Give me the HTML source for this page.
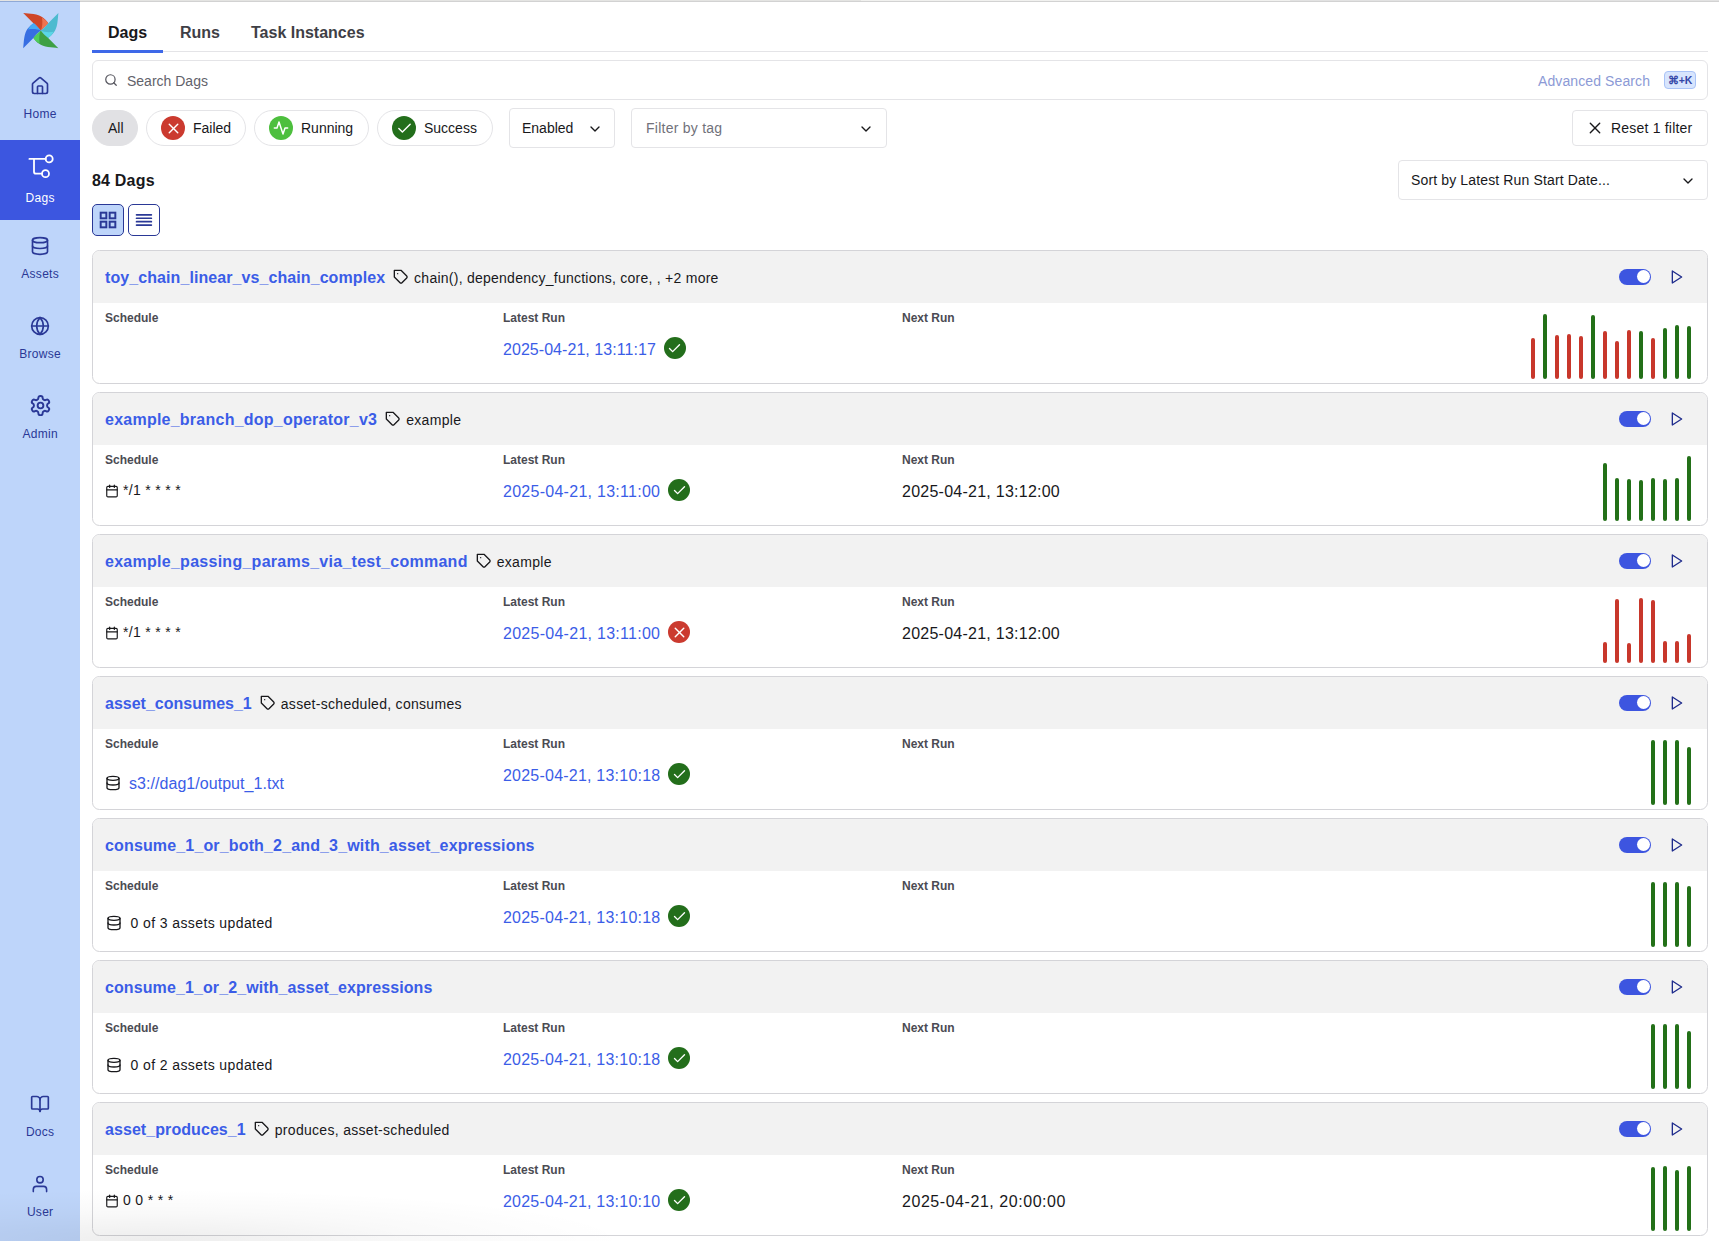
<!DOCTYPE html><html><head><meta charset="utf-8"><style>

*{box-sizing:border-box;margin:0;padding:0}
html,body{width:1719px;height:1241px;overflow:hidden;background:#fff;font-family:"Liberation Sans", sans-serif;color:#18181b}
.topline{position:absolute;left:0;top:0;width:1719px;height:1px;background:#e4e4e2;z-index:10}
.topline2{position:absolute;left:0;top:1px;width:1719px;height:1px;background:#d2d2d2;z-index:10}
.topline3{position:absolute;left:0;top:1px;width:80px;height:1px;background:#8fa9d6;z-index:11}
.side{position:absolute;left:0;top:0;width:80px;height:1241px;background:#bed5fa}
.logo{position:absolute;left:20px;top:10px;width:42px;height:42px}
.nav{position:absolute;left:0;width:80px;height:80px;color:#2a3896;text-align:center}
.nav.active{background:#3c56e0;color:#fff}
.nav svg{position:absolute;left:30px;top:16px}
.nav .t{position:absolute;left:0;right:0;top:46px;font-size:12px;line-height:16px;letter-spacing:0.3px;text-indent:0.3px}
.tabs{position:absolute;left:92px;top:0;width:1616px;height:52px}
.tabline{position:absolute;left:92px;top:51px;width:1616px;height:1px;background:#e4e4e7}
.tab{position:absolute;top:21px;font-size:16px;line-height:24px;font-weight:bold;color:#3f3f46}
.tab.act{color:#18181b}
.tabul{position:absolute;left:92px;top:50px;width:71px;height:3px;background:#3e68e8}
.search{position:absolute;left:92px;top:60px;width:1616px;height:40px;border:1px solid #e4e4e7;border-radius:6px}
.search .ph{position:absolute;left:34px;top:10px;font-size:14px;line-height:20px;color:#62626b}
.search .adv{position:absolute;left:1445px;top:10px;letter-spacing:0.1px;font-size:14px;line-height:20px;color:#8c9ad6}
.kbd{position:absolute;left:1571px;top:10px;width:32px;height:18px;border:1px solid #a9c3f7;background:#d8e5fd;border-radius:4px;font-size:10.5px;line-height:16px;text-align:center;color:#3445a6;font-weight:bold}
.pill{position:absolute;top:110px;height:36px;border:1px solid #e4e4e7;border-radius:18px;font-size:14px;line-height:34px;color:#18181b}
.pill .dot{position:absolute;left:14px;top:5px;width:24px;height:24px;border-radius:12px;display:flex;align-items:center;justify-content:center}
.pill .pt{position:absolute;left:46px;top:0}
.sel{position:absolute;top:108px;height:40px;border:1px solid #e4e4e7;border-radius:4px;font-size:14px;line-height:38px}
.chev{position:absolute;top:11.5px;line-height:0}
.count{position:absolute;left:92px;top:169px;letter-spacing:0.2px;font-size:16px;line-height:24px;font-weight:bold}
.vbtn{position:absolute;top:204px;width:32px;height:32px;border:1px solid #2a3896;border-radius:5px;color:#2a3896}
.card{position:absolute;left:92px;width:1616px;height:134px;border:1px solid #d4d4d8;border-radius:7.5px;overflow:hidden;background:#fff}
.chead{position:absolute;left:0;top:0;width:100%;height:52px;background:#f2f2f2;display:flex;align-items:center;padding-left:12px;padding-top:2px}
.ctitle{font-size:16px;line-height:24px;font-weight:bold;color:#3b5de7;white-space:nowrap}
.ctagicon{display:inline-block;width:16px;height:16px;margin-left:8px;color:#18181b;position:relative;top:-1px}
.ctagicon svg{display:block}
.ctags{font-size:14px;line-height:20px;white-space:nowrap;margin-left:5px;letter-spacing:0.25px}
.toggle{position:absolute;left:1526px;top:18px;width:32px;height:16px;border-radius:8px;background:#3d55e0}
.knob{position:absolute;left:17.5px;top:1px;width:13px;height:13px;border-radius:7px;background:#fff}
.play{position:absolute;left:1576px;top:18px;width:16px;height:16px;color:#1e2b8c}
.play svg{display:block}
.cbody{position:absolute;left:0;top:52px;width:100%;height:81px}
.lbl{position:absolute;top:7px;font-size:12px;line-height:16px;font-weight:bold;color:#4b4b53}
.sched{position:absolute;left:12px;font-size:14px;line-height:20px;white-space:nowrap;display:flex;align-items:center}
.sched .ic{display:inline-block;width:16px;height:16px}
.sched .ic svg{display:block}
.sched.cron{top:35px;letter-spacing:0.33px}
.sched.cron .ic{width:14px;height:14px;position:relative;top:1px}
.sched.cron .ic{margin-right:4px}
.sched.asset{top:43px;font-size:16px;line-height:24px}
.sched.asset .ic{margin-right:8px;position:relative;top:-1px}
.sched.asset .lnk{letter-spacing:0.05px}
.sched.assets{top:42px;letter-spacing:0.4px;left:13px}
.sched.assets .ic{margin-right:8.5px}
.lnk{color:#3b5de7}
.latest .lnk{position:relative;top:2px}
.latest{position:absolute;left:410px;top:33px;font-size:16px;line-height:24px;display:flex;align-items:center;white-space:nowrap}
.st{display:inline-flex;align-items:center;justify-content:center;border-radius:50%;margin-left:8px}
.st svg{display:block}
.st.ok{background:#236e1b}
.st.bad{background:#cb3a2f}
.next{position:absolute;left:809px;top:35px;letter-spacing:0.25px;font-size:16px;line-height:24px;white-space:nowrap}
.bar{position:absolute;bottom:5px;width:4px;border-radius:2px}
.bar.g{background:#237018}
.bar.r{background:#c8372b}

</style></head><body>
<div class="topline"></div><div class="topline2"></div><div class="topline3"></div><div style="position:absolute;left:861px;top:0;width:429px;height:1px;background:#f1f1ef;z-index:12"></div><div style="position:absolute;left:1291px;top:0;width:428px;height:1px;background:#e2e2e2;z-index:12"></div>
<div class="side">
<svg class="logo" viewBox="0 0 42 42"><g transform="translate(20.8 20.6)"><g transform="rotate(0)"><path fill="#cf4627" d="M-17.6 -17.6 C-11 -16.8 -3 -17 2 -13 C4 -11.5 6 -9.5 7.4 -7.3 L7.4 -6.9 L0 0 C-2 -2.5 -4.5 -5.5 -7.4 -7.4 Z"/><path fill="#ee7350" d="M1.2 -12.8 C4 -11 6 -9.5 7.4 -7.3 L7.4 -6.9 L0 0 C1.6 -3 1.9 -8 1.2 -12.8 Z"/></g><g transform="rotate(90)"><path fill="#4cbbcf" d="M-17.6 -17.6 C-11 -16.8 -3 -17 2 -13 C4 -11.5 6 -9.5 7.4 -7.3 L7.4 -6.9 L0 0 C-2 -2.5 -4.5 -5.5 -7.4 -7.4 Z"/><path fill="#5ad6e6" d="M1.2 -12.8 C4 -11 6 -9.5 7.4 -7.3 L7.4 -6.9 L0 0 C1.6 -3 1.9 -8 1.2 -12.8 Z"/></g><g transform="rotate(180)"><path fill="#3ea044" d="M-17.6 -17.6 C-11 -16.8 -3 -17 2 -13 C4 -11.5 6 -9.5 7.4 -7.3 L7.4 -6.9 L0 0 C-2 -2.5 -4.5 -5.5 -7.4 -7.4 Z"/><path fill="#50cd5a" d="M1.2 -12.8 C4 -11 6 -9.5 7.4 -7.3 L7.4 -6.9 L0 0 C1.6 -3 1.9 -8 1.2 -12.8 Z"/></g><g transform="rotate(270)"><path fill="#376ee2" d="M-17.6 -17.6 C-11 -16.8 -3 -17 2 -13 C4 -11.5 6 -9.5 7.4 -7.3 L7.4 -6.9 L0 0 C-2 -2.5 -4.5 -5.5 -7.4 -7.4 Z"/><path fill="#46abf5" d="M1.2 -12.8 C4 -11 6 -9.5 7.4 -7.3 L7.4 -6.9 L0 0 C1.6 -3 1.9 -8 1.2 -12.8 Z"/></g></g></svg>
<div class="nav" style="top:60px"><svg width="20" height="20" viewBox="0 0 24 24" fill="none" stroke="currentColor" stroke-width="2" stroke-linecap="round" stroke-linejoin="round"><path d="M15 21v-8a1 1 0 0 0-1-1h-4a1 1 0 0 0-1 1v8"/><path d="M3 10a2 2 0 0 1 .709-1.528l7-5.999a2 2 0 0 1 2.582 0l7 5.999A2 2 0 0 1 21 10v9a2 2 0 0 1-2 2H5a2 2 0 0 1-2-2z"/></svg><div class="t" style="top:46px">Home</div></div>
<div class="nav active" style="top:140px"><svg width="26" height="26" viewBox="0 0 26 26" fill="none" stroke="currentColor" stroke-width="1.8" stroke-linecap="round" stroke-linejoin="round" style="left:28px;top:14px"><path d="M1.4 4.9H17.7"/><circle cx="21.2" cy="4.9" r="3.5"/><path d="M6 4.9V17.7a2 2 0 0 0 2 2H14"/><circle cx="17.5" cy="19.7" r="3.5"/></svg><div class="t" style="top:50px">Dags</div></div>
<div class="nav" style="top:220px"><svg width="20" height="20" viewBox="0 0 24 24" fill="none" stroke="currentColor" stroke-width="2" stroke-linecap="round" stroke-linejoin="round"><ellipse cx="12" cy="5" rx="9" ry="3"/><path d="M3 5v14a9 3 0 0 0 18 0V5"/><path d="M3 12a9 3 0 0 0 18 0"/></svg><div class="t" style="top:46px">Assets</div></div>
<div class="nav" style="top:300px"><svg width="20" height="20" viewBox="0 0 24 24" fill="none" stroke="currentColor" stroke-width="2" stroke-linecap="round" stroke-linejoin="round"><circle cx="12" cy="12" r="10"/><path d="M12 2a14.5 14.5 0 0 0 0 20 14.5 14.5 0 0 0 0-20"/><path d="M2 12h20"/></svg><div class="t" style="top:46px">Browse</div></div>
<div class="nav" style="top:380px"><svg width="23" height="23" style="left:28.5px;top:14px" viewBox="0 0 24 24" fill="none" stroke="currentColor" stroke-width="2" stroke-linecap="round" stroke-linejoin="round"><path d="M12.22 2h-.44a2 2 0 0 0-2 2v.18a2 2 0 0 1-1 1.73l-.43.25a2 2 0 0 1-2 0l-.15-.08a2 2 0 0 0-2.73.73l-.22.38a2 2 0 0 0 .73 2.73l.15.1a2 2 0 0 1 1 1.72v.51a2 2 0 0 1-1 1.74l-.15.09a2 2 0 0 0-.73 2.73l.22.38a2 2 0 0 0 2.73.73l.15-.08a2 2 0 0 1 2 0l.43.25a2 2 0 0 1 1 1.73V20a2 2 0 0 0 2 2h.44a2 2 0 0 0 2-2v-.18a2 2 0 0 1 1-1.73l.43-.25a2 2 0 0 1 2 0l.15.08a2 2 0 0 0 2.73-.73l.22-.39a2 2 0 0 0-.73-2.73l-.15-.08a2 2 0 0 1-1-1.74v-.5a2 2 0 0 1 1-1.74l.15-.09a2 2 0 0 0 .73-2.73l-.22-.38a2 2 0 0 0-2.73-.73l-.15.08a2 2 0 0 1-2 0l-.43-.25a2 2 0 0 1-1-1.73V4a2 2 0 0 0-2-2z"/><circle cx="12" cy="12" r="3"/></svg><div class="t" style="top:46px">Admin</div></div>
<div class="nav" style="top:1078px"><svg width="20" height="20" viewBox="0 0 24 24" fill="none" stroke="currentColor" stroke-width="2" stroke-linecap="round" stroke-linejoin="round"><path d="M12 7v14"/><path d="M3 18a1 1 0 0 1-1-1V4a1 1 0 0 1 1-1h5a4 4 0 0 1 4 4 4 4 0 0 1 4-4h5a1 1 0 0 1 1 1v13a1 1 0 0 1-1 1h-6a3 3 0 0 0-3 3 3 3 0 0 0-3-3z"/></svg><div class="t" style="top:46px">Docs</div></div>
<div class="nav" style="top:1158px"><svg width="24" height="24" viewBox="0 0 24 24" fill="none" stroke="currentColor" stroke-width="1.6" stroke-linecap="round" stroke-linejoin="round" style="left:28px;top:14px"><circle cx="12" cy="7.7" r="3.2"/><path d="M5.3 19.6V17.4a3 3 0 0 1 3-3H15.6a3 3 0 0 1 3 3V19.6"/></svg><div class="t" style="top:46px">User</div></div>
</div>
<div class="tabline"></div><div class="tabul"></div>
<span class="tab act" style="left:108px">Dags</span><span class="tab" style="left:180px">Runs</span><span class="tab" style="left:251px">Task Instances</span>
<div class="search"><svg width="14" height="14" viewBox="0 0 24 24" fill="none" stroke="#55555e" stroke-width="2.1" stroke-linecap="round" stroke-linejoin="round" style="position:absolute;left:11px;top:12px"><circle cx="11" cy="11" r="8"/><line x1="21" y1="21" x2="16.65" y2="16.65"/></svg><span class="ph">Search Dags</span><span class="adv">Advanced Search</span><span class="kbd">⌘+K</span></div>
<div class="pill" style="left:92px;width:46px;background:#e1e1e4;border-color:#e1e1e4"><span class="pt" style="left:15px">All</span></div>
<div class="pill" style="left:146px;width:100px"><span class="dot" style="background:#cb3a2f"><svg width="17" height="17" viewBox="0 0 24 24" fill="none" stroke="#fff" stroke-width="2" stroke-linecap="round" stroke-linejoin="round"><line x1="18" y1="6" x2="6" y2="18"/><line x1="6" y1="6" x2="18" y2="18"/></svg></span><span class="pt" style="left:46px">Failed</span></div>
<div class="pill" style="left:254px;width:115px"><span class="dot" style="background:#4dbf3e"><svg width="16" height="16" viewBox="0 0 24 24" fill="none" stroke="#fff" stroke-width="2.2" stroke-linecap="round" stroke-linejoin="round"><polyline points="22 12 18 12 15 21 9 3 6 12 2 12"/></svg></span><span class="pt">Running</span></div>
<div class="pill" style="left:377px;width:116px"><span class="dot" style="background:#236e1b"><svg width="17" height="17" viewBox="0 0 24 24" fill="none" stroke="#fff" stroke-width="2" stroke-linecap="round" stroke-linejoin="round"><polyline points="20 6 9 17 4 12"/></svg></span><span class="pt">Success</span></div>
<div class="sel" style="left:509px;width:106px"><span style="position:absolute;left:12px">Enabled</span><span class="chev" style="left:77px"><svg width="16" height="16" viewBox="0 0 24 24" fill="none" stroke="currentColor" stroke-width="2" stroke-linecap="round" stroke-linejoin="round"><polyline points="6 9 12 15 18 9"/></svg></span></div>
<div class="sel" style="left:631px;width:256px;color:#71717a"><span style="position:absolute;left:14px;letter-spacing:0.25px">Filter by tag</span><span class="chev" style="left:226px;color:#18181b"><svg width="16" height="16" viewBox="0 0 24 24" fill="none" stroke="currentColor" stroke-width="2" stroke-linecap="round" stroke-linejoin="round"><polyline points="6 9 12 15 18 9"/></svg></span></div>
<div class="sel" style="left:1572px;width:136px;top:110px;height:36px;line-height:34px"><span style="position:absolute;left:16px;top:11px;line-height:0"><svg width="12" height="12" viewBox="0 0 12 12" fill="none" stroke="currentColor" stroke-width="1.4" stroke-linecap="round"><line x1="1.3" y1="1.3" x2="10.7" y2="10.7"/><line x1="10.7" y1="1.3" x2="1.3" y2="10.7"/></svg></span><span style="position:absolute;left:38px;letter-spacing:0.2px">Reset 1 filter</span></div>
<div class="count">84 Dags</div>
<div class="sel" style="left:1398px;width:310px;top:160px"><span style="position:absolute;left:12px;letter-spacing:0.14px">Sort by Latest Run Start Date...</span><span class="chev" style="left:281px"><svg width="16" height="16" viewBox="0 0 24 24" fill="none" stroke="currentColor" stroke-width="2" stroke-linecap="round" stroke-linejoin="round"><polyline points="6 9 12 15 18 9"/></svg></span></div>
<div class="vbtn" style="left:92px;background:#bed5fa"><svg width="18" height="18" viewBox="0 0 18 18" fill="none" stroke="currentColor" stroke-width="1.95" style="position:absolute;left:6px;top:6px"><rect x="1.675" y="1.675" width="5.65" height="5.65"/><rect x="10.675" y="1.675" width="5.65" height="5.65"/><rect x="1.675" y="10.675" width="5.65" height="5.65"/><rect x="10.675" y="10.675" width="5.65" height="5.65"/></svg></div><div class="vbtn" style="left:128px"><svg width="18" height="18" viewBox="0 0 18 18" fill="none" stroke="currentColor" stroke-width="1.7" stroke-linecap="round" style="position:absolute;left:6px;top:6px"><line x1="1.55" y1="3.85" x2="16.35" y2="3.85"/><line x1="1.55" y1="7.25" x2="16.35" y2="7.25"/><line x1="1.55" y1="10.65" x2="16.35" y2="10.65"/><line x1="1.55" y1="14.05" x2="16.35" y2="14.05"/></svg></div>
<div class="card" style="top:250px"><div class="chead"><span class="ctitle" style="letter-spacing:0.08px">toy_chain_linear_vs_chain_complex</span><span class="ctagicon"><svg width="16" height="16" viewBox="0 0 24 24" fill="none" stroke="currentColor" stroke-width="2" stroke-linecap="round" stroke-linejoin="round"><path d="M20.59 13.41l-7.17 7.17a2 2 0 0 1-2.83 0L2 12V2h10l8.59 8.59a2 2 0 0 1 0 2.82z"/><line x1="7" y1="7" x2="7.01" y2="7"/></svg></span><span class="ctags" style="letter-spacing:0.25px">chain(), dependency_functions, core, , +2 more</span><span class="toggle"><span class="knob"></span></span><span class="play"><svg width="16" height="16" viewBox="0 0 24 24" fill="none" stroke="currentColor" stroke-width="2" stroke-linecap="round" stroke-linejoin="round"><polygon points="5 3 19 12 5 21 5 3"/></svg></span></div><div class="cbody"><div class="lbl" style="left:12px">Schedule</div><div class="lbl" style="left:410px">Latest Run</div><div class="lbl" style="left:809px">Next Run</div><div class="latest"><span class="lnk" style="letter-spacing:0.05px">2025-04-21, 13:11:17</span><span class="st ok" style="width:22px;height:22px"><svg width="15" height="15" viewBox="0 0 24 24" fill="none" stroke="#fff" stroke-width="2.2" stroke-linecap="round" stroke-linejoin="round"><polyline points="20 6 9 17 4 12"/></svg></span></div><span class="bar r" style="left:1438px;height:41px"></span><span class="bar g" style="left:1450px;height:65px"></span><span class="bar r" style="left:1462px;height:44px"></span><span class="bar r" style="left:1474px;height:45px"></span><span class="bar r" style="left:1486px;height:43px"></span><span class="bar g" style="left:1498px;height:64px"></span><span class="bar r" style="left:1510px;height:48px"></span><span class="bar r" style="left:1522px;height:38px"></span><span class="bar r" style="left:1534px;height:49px"></span><span class="bar g" style="left:1546px;height:48px"></span><span class="bar r" style="left:1558px;height:41px"></span><span class="bar g" style="left:1570px;height:51px"></span><span class="bar g" style="left:1582px;height:54px"></span><span class="bar g" style="left:1594px;height:53px"></span></div></div>
<div class="card" style="top:392px"><div class="chead"><span class="ctitle" style="letter-spacing:0.24px">example_branch_dop_operator_v3</span><span class="ctagicon"><svg width="16" height="16" viewBox="0 0 24 24" fill="none" stroke="currentColor" stroke-width="2" stroke-linecap="round" stroke-linejoin="round"><path d="M20.59 13.41l-7.17 7.17a2 2 0 0 1-2.83 0L2 12V2h10l8.59 8.59a2 2 0 0 1 0 2.82z"/><line x1="7" y1="7" x2="7.01" y2="7"/></svg></span><span class="ctags" style="letter-spacing:0.3px">example</span><span class="toggle"><span class="knob"></span></span><span class="play"><svg width="16" height="16" viewBox="0 0 24 24" fill="none" stroke="currentColor" stroke-width="2" stroke-linecap="round" stroke-linejoin="round"><polygon points="5 3 19 12 5 21 5 3"/></svg></span></div><div class="cbody"><div class="lbl" style="left:12px">Schedule</div><div class="lbl" style="left:410px">Latest Run</div><div class="lbl" style="left:809px">Next Run</div><div class="sched cron"><span class="ic"><svg width="14" height="14" viewBox="0 0 24 24" fill="none" stroke="currentColor" stroke-width="2" stroke-linecap="round" stroke-linejoin="round"><rect x="3" y="4" width="18" height="18" rx="2"/><line x1="16" y1="2" x2="16" y2="6"/><line x1="8" y1="2" x2="8" y2="6"/><line x1="3" y1="10" x2="21" y2="10"/></svg></span><span>*/1 * * * *</span></div><div class="latest"><span class="lnk" style="letter-spacing:0.27px">2025-04-21, 13:11:00</span><span class="st ok" style="width:22px;height:22px"><svg width="15" height="15" viewBox="0 0 24 24" fill="none" stroke="#fff" stroke-width="2.2" stroke-linecap="round" stroke-linejoin="round"><polyline points="20 6 9 17 4 12"/></svg></span></div><div class="next" style="letter-spacing:0.25px">2025-04-21, 13:12:00</div><span class="bar g" style="left:1510px;height:58px"></span><span class="bar g" style="left:1522px;height:43px"></span><span class="bar g" style="left:1534px;height:42px"></span><span class="bar g" style="left:1546px;height:41px"></span><span class="bar g" style="left:1558px;height:43px"></span><span class="bar g" style="left:1570px;height:42px"></span><span class="bar g" style="left:1582px;height:43px"></span><span class="bar g" style="left:1594px;height:65px"></span></div></div>
<div class="card" style="top:534px"><div class="chead"><span class="ctitle" style="letter-spacing:0.27px">example_passing_params_via_test_command</span><span class="ctagicon"><svg width="16" height="16" viewBox="0 0 24 24" fill="none" stroke="currentColor" stroke-width="2" stroke-linecap="round" stroke-linejoin="round"><path d="M20.59 13.41l-7.17 7.17a2 2 0 0 1-2.83 0L2 12V2h10l8.59 8.59a2 2 0 0 1 0 2.82z"/><line x1="7" y1="7" x2="7.01" y2="7"/></svg></span><span class="ctags" style="letter-spacing:0.3px">example</span><span class="toggle"><span class="knob"></span></span><span class="play"><svg width="16" height="16" viewBox="0 0 24 24" fill="none" stroke="currentColor" stroke-width="2" stroke-linecap="round" stroke-linejoin="round"><polygon points="5 3 19 12 5 21 5 3"/></svg></span></div><div class="cbody"><div class="lbl" style="left:12px">Schedule</div><div class="lbl" style="left:410px">Latest Run</div><div class="lbl" style="left:809px">Next Run</div><div class="sched cron"><span class="ic"><svg width="14" height="14" viewBox="0 0 24 24" fill="none" stroke="currentColor" stroke-width="2" stroke-linecap="round" stroke-linejoin="round"><rect x="3" y="4" width="18" height="18" rx="2"/><line x1="16" y1="2" x2="16" y2="6"/><line x1="8" y1="2" x2="8" y2="6"/><line x1="3" y1="10" x2="21" y2="10"/></svg></span><span>*/1 * * * *</span></div><div class="latest"><span class="lnk" style="letter-spacing:0.27px">2025-04-21, 13:11:00</span><span class="st bad" style="width:22px;height:22px"><svg width="17" height="17" viewBox="0 0 24 24" fill="none" stroke="#fff" stroke-width="2" stroke-linecap="round" stroke-linejoin="round"><line x1="18" y1="6" x2="6" y2="18"/><line x1="6" y1="6" x2="18" y2="18"/></svg></span></div><div class="next" style="letter-spacing:0.25px">2025-04-21, 13:12:00</div><span class="bar r" style="left:1510px;height:21px"></span><span class="bar r" style="left:1522px;height:64px"></span><span class="bar r" style="left:1534px;height:20px"></span><span class="bar r" style="left:1546px;height:65px"></span><span class="bar r" style="left:1558px;height:63px"></span><span class="bar r" style="left:1570px;height:22px"></span><span class="bar r" style="left:1582px;height:22px"></span><span class="bar r" style="left:1594px;height:29px"></span></div></div>
<div class="card" style="top:676px"><div class="chead"><span class="ctitle" style="letter-spacing:0.0px">asset_consumes_1</span><span class="ctagicon"><svg width="16" height="16" viewBox="0 0 24 24" fill="none" stroke="currentColor" stroke-width="2" stroke-linecap="round" stroke-linejoin="round"><path d="M20.59 13.41l-7.17 7.17a2 2 0 0 1-2.83 0L2 12V2h10l8.59 8.59a2 2 0 0 1 0 2.82z"/><line x1="7" y1="7" x2="7.01" y2="7"/></svg></span><span class="ctags" style="letter-spacing:0.3px">asset-scheduled, consumes</span><span class="toggle"><span class="knob"></span></span><span class="play"><svg width="16" height="16" viewBox="0 0 24 24" fill="none" stroke="currentColor" stroke-width="2" stroke-linecap="round" stroke-linejoin="round"><polygon points="5 3 19 12 5 21 5 3"/></svg></span></div><div class="cbody"><div class="lbl" style="left:12px">Schedule</div><div class="lbl" style="left:410px">Latest Run</div><div class="lbl" style="left:809px">Next Run</div><div class="sched asset"><span class="ic"><svg width="16" height="16" viewBox="0 0 24 24" fill="none" stroke="currentColor" stroke-width="2" stroke-linecap="round" stroke-linejoin="round"><ellipse cx="12" cy="5" rx="9" ry="3"/><path d="M21 12c0 1.66-4 3-9 3s-9-1.34-9-3"/><path d="M3 5v14c0 1.66 4 3 9 3s9-1.34 9-3V5"/></svg></span><span class="lnk">s3://dag1/output_1.txt</span></div><div class="latest"><span class="lnk" style="letter-spacing:0.22px">2025-04-21, 13:10:18</span><span class="st ok" style="width:22px;height:22px"><svg width="15" height="15" viewBox="0 0 24 24" fill="none" stroke="#fff" stroke-width="2.2" stroke-linecap="round" stroke-linejoin="round"><polyline points="20 6 9 17 4 12"/></svg></span></div><span class="bar g" style="left:1558px;height:65px"></span><span class="bar g" style="left:1570px;height:65px"></span><span class="bar g" style="left:1582px;height:65px"></span><span class="bar g" style="left:1594px;height:58px"></span></div></div>
<div class="card" style="top:818px"><div class="chead"><span class="ctitle" style="letter-spacing:0.15px">consume_1_or_both_2_and_3_with_asset_expressions</span><span class="toggle"><span class="knob"></span></span><span class="play"><svg width="16" height="16" viewBox="0 0 24 24" fill="none" stroke="currentColor" stroke-width="2" stroke-linecap="round" stroke-linejoin="round"><polygon points="5 3 19 12 5 21 5 3"/></svg></span></div><div class="cbody"><div class="lbl" style="left:12px">Schedule</div><div class="lbl" style="left:410px">Latest Run</div><div class="lbl" style="left:809px">Next Run</div><div class="sched assets"><span class="ic"><svg width="16" height="16" viewBox="0 0 24 24" fill="none" stroke="currentColor" stroke-width="2" stroke-linecap="round" stroke-linejoin="round"><ellipse cx="12" cy="5" rx="9" ry="3"/><path d="M21 12c0 1.66-4 3-9 3s-9-1.34-9-3"/><path d="M3 5v14c0 1.66 4 3 9 3s9-1.34 9-3V5"/></svg></span><span>0 of 3 assets updated</span></div><div class="latest"><span class="lnk" style="letter-spacing:0.22px">2025-04-21, 13:10:18</span><span class="st ok" style="width:22px;height:22px"><svg width="15" height="15" viewBox="0 0 24 24" fill="none" stroke="#fff" stroke-width="2.2" stroke-linecap="round" stroke-linejoin="round"><polyline points="20 6 9 17 4 12"/></svg></span></div><span class="bar g" style="left:1558px;height:65px"></span><span class="bar g" style="left:1570px;height:65px"></span><span class="bar g" style="left:1582px;height:65px"></span><span class="bar g" style="left:1594px;height:61px"></span></div></div>
<div class="card" style="top:960px"><div class="chead"><span class="ctitle" style="letter-spacing:0.1px">consume_1_or_2_with_asset_expressions</span><span class="toggle"><span class="knob"></span></span><span class="play"><svg width="16" height="16" viewBox="0 0 24 24" fill="none" stroke="currentColor" stroke-width="2" stroke-linecap="round" stroke-linejoin="round"><polygon points="5 3 19 12 5 21 5 3"/></svg></span></div><div class="cbody"><div class="lbl" style="left:12px">Schedule</div><div class="lbl" style="left:410px">Latest Run</div><div class="lbl" style="left:809px">Next Run</div><div class="sched assets"><span class="ic"><svg width="16" height="16" viewBox="0 0 24 24" fill="none" stroke="currentColor" stroke-width="2" stroke-linecap="round" stroke-linejoin="round"><ellipse cx="12" cy="5" rx="9" ry="3"/><path d="M21 12c0 1.66-4 3-9 3s-9-1.34-9-3"/><path d="M3 5v14c0 1.66 4 3 9 3s9-1.34 9-3V5"/></svg></span><span>0 of 2 assets updated</span></div><div class="latest"><span class="lnk" style="letter-spacing:0.22px">2025-04-21, 13:10:18</span><span class="st ok" style="width:22px;height:22px"><svg width="15" height="15" viewBox="0 0 24 24" fill="none" stroke="#fff" stroke-width="2.2" stroke-linecap="round" stroke-linejoin="round"><polyline points="20 6 9 17 4 12"/></svg></span></div><span class="bar g" style="left:1558px;height:65px"></span><span class="bar g" style="left:1570px;height:65px"></span><span class="bar g" style="left:1582px;height:65px"></span><span class="bar g" style="left:1594px;height:58px"></span></div></div>
<div class="card" style="top:1102px"><div class="chead"><span class="ctitle" style="letter-spacing:0.07px">asset_produces_1</span><span class="ctagicon"><svg width="16" height="16" viewBox="0 0 24 24" fill="none" stroke="currentColor" stroke-width="2" stroke-linecap="round" stroke-linejoin="round"><path d="M20.59 13.41l-7.17 7.17a2 2 0 0 1-2.83 0L2 12V2h10l8.59 8.59a2 2 0 0 1 0 2.82z"/><line x1="7" y1="7" x2="7.01" y2="7"/></svg></span><span class="ctags" style="letter-spacing:0.3px">produces, asset-scheduled</span><span class="toggle"><span class="knob"></span></span><span class="play"><svg width="16" height="16" viewBox="0 0 24 24" fill="none" stroke="currentColor" stroke-width="2" stroke-linecap="round" stroke-linejoin="round"><polygon points="5 3 19 12 5 21 5 3"/></svg></span></div><div class="cbody"><div class="lbl" style="left:12px">Schedule</div><div class="lbl" style="left:410px">Latest Run</div><div class="lbl" style="left:809px">Next Run</div><div class="sched cron"><span class="ic"><svg width="14" height="14" viewBox="0 0 24 24" fill="none" stroke="currentColor" stroke-width="2" stroke-linecap="round" stroke-linejoin="round"><rect x="3" y="4" width="18" height="18" rx="2"/><line x1="16" y1="2" x2="16" y2="6"/><line x1="8" y1="2" x2="8" y2="6"/><line x1="3" y1="10" x2="21" y2="10"/></svg></span><span>0 0 * * *</span></div><div class="latest"><span class="lnk" style="letter-spacing:0.22px">2025-04-21, 13:10:10</span><span class="st ok" style="width:22px;height:22px"><svg width="15" height="15" viewBox="0 0 24 24" fill="none" stroke="#fff" stroke-width="2.2" stroke-linecap="round" stroke-linejoin="round"><polyline points="20 6 9 17 4 12"/></svg></span></div><div class="next" style="letter-spacing:0.55px">2025-04-21, 20:00:00</div><span class="bar g" style="left:1558px;height:64px"></span><span class="bar g" style="left:1570px;height:65px"></span><span class="bar g" style="left:1582px;height:61px"></span><span class="bar g" style="left:1594px;height:65px"></span></div></div>
<div style="position:absolute;left:0;top:1180px;width:700px;height:61px;pointer-events:none;background:radial-gradient(ellipse 480px 52px at 150px 100%, rgba(0,0,0,0.07), rgba(0,0,0,0.025) 55%, rgba(0,0,0,0) 100%)"></div>
</body></html>
